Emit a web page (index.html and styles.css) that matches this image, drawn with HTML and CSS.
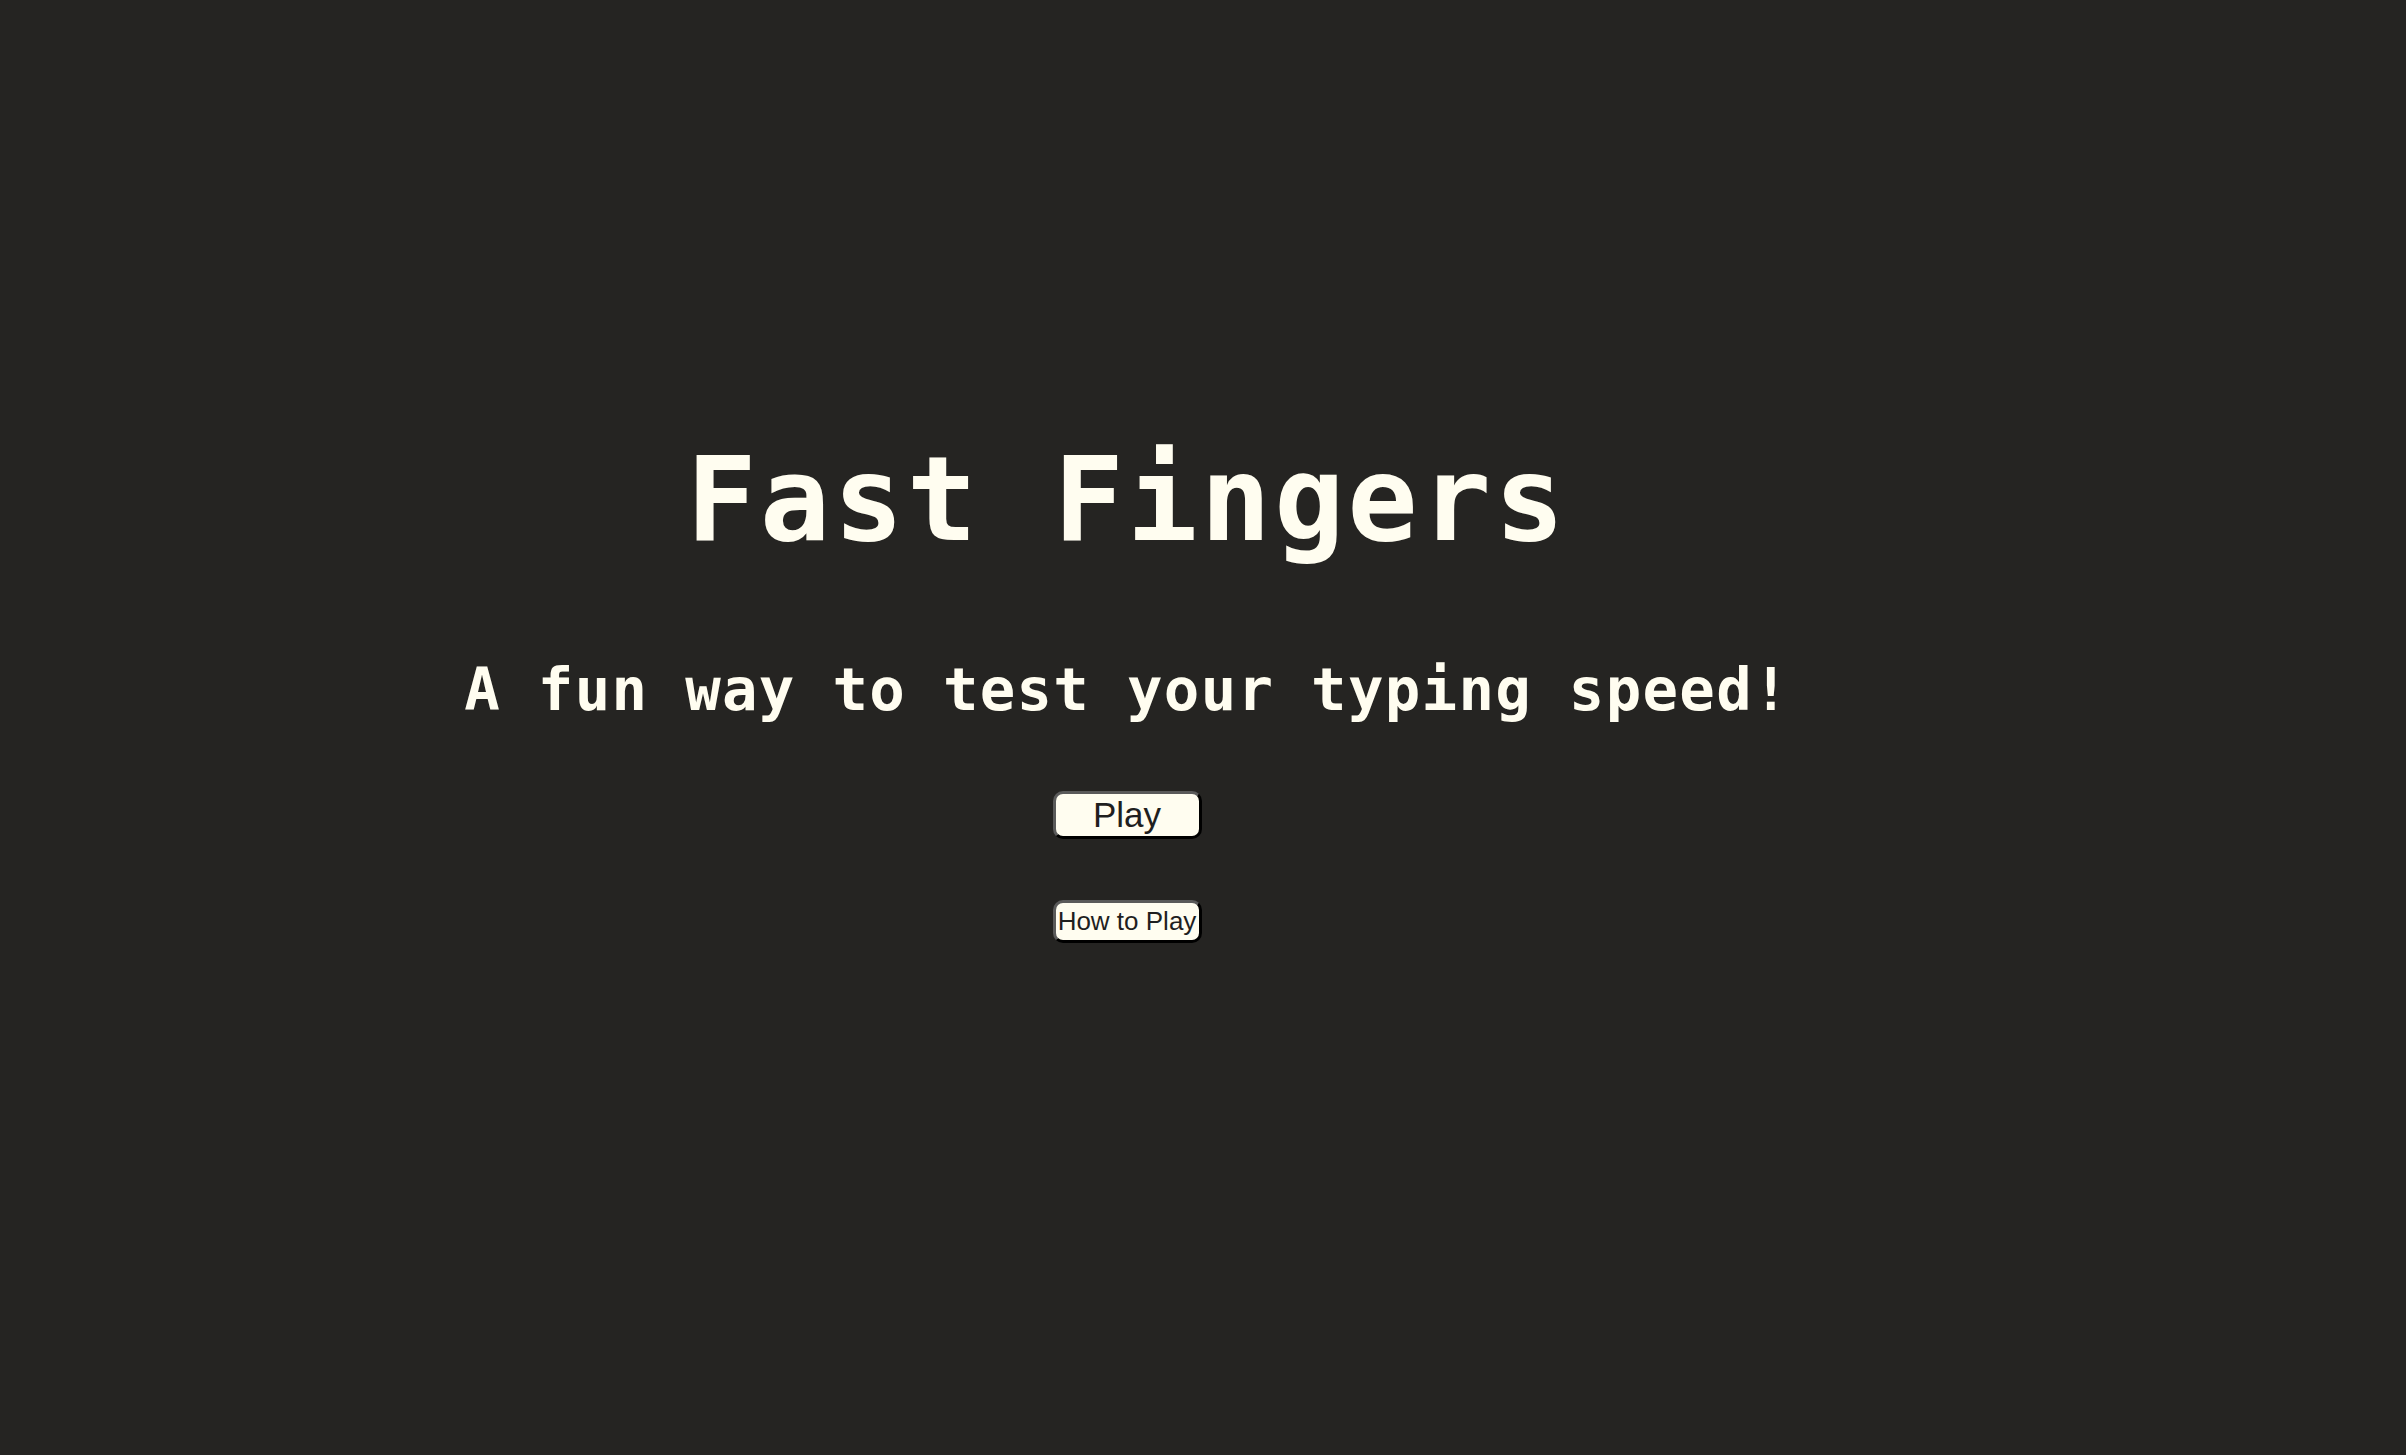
FILE: index.html
```html
<!DOCTYPE html>
<html lang="en">
<head>
<meta charset="utf-8">
<title>Fast Fingers</title>
<link rel="stylesheet" href="styles.css">
</head>
<body>
<main class="page">
  <h1 class="title">Fast Fingers</h1>
  <h2 class="subtitle">A fun way to test your typing speed!</h2>
  <button class="btn btn-play" type="button">Play</button>
  <button class="btn btn-how" type="button">How to Play</button>
</main>
</body>
</html>
```

FILE: styles.css
```css
html, body {
  margin: 0;
  padding: 0;
  background: #252422;
}

body {
  font-family: "DejaVu Sans Mono", "Liberation Mono", monospace;
  color: #fffdf0;
}

.page {
  display: flex;
  flex-direction: column;
  align-items: center;
  padding: 441px 152px 0 0;
}

.title {
  margin: 0;
  font-size: 117px;
  line-height: 1;
  font-weight: bold;
  letter-spacing: 3px;
  white-space: nowrap;
}

.subtitle {
  margin: 102px 0 0 0;
  font-size: 59px;
  line-height: 1;
  font-weight: bold;
  letter-spacing: 1.3px;
  white-space: nowrap;
}

.btn {
  box-sizing: border-box;
  width: 149px;
  padding: 0;
  display: flex;
  align-items: center;
  justify-content: center;
  background: #fffdf0;
  color: #1f1f1f;
  font-family: "Liberation Sans", Arial, sans-serif;
  border-style: solid;
  border-width: 3px;
  border-color: #5a5a5a #000 #000 #5a5a5a;
  border-radius: 10px;
  white-space: nowrap;
  overflow: visible;
}

.btn-play {
  margin-top: 72px;
  height: 48px;
  font-size: 35px;
}

.btn-how {
  margin-top: 61px;
  height: 43px;
  font-size: 26px;
}
```
